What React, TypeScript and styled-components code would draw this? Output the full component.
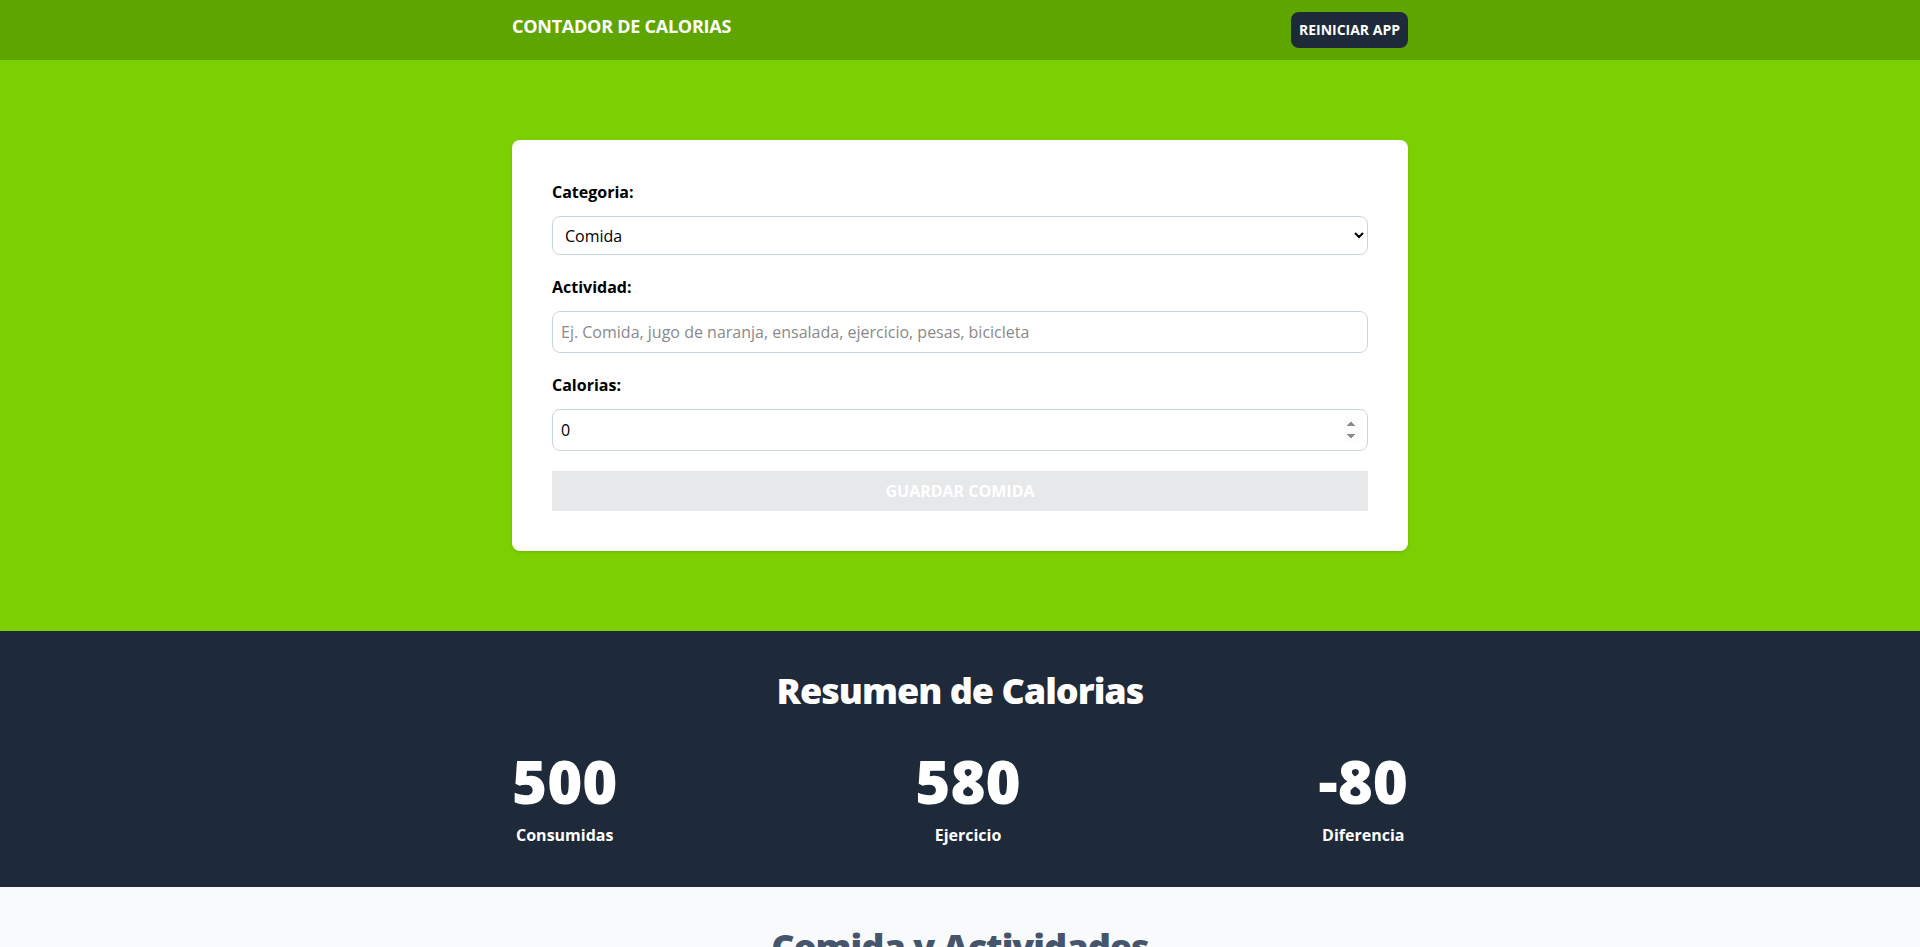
import React, { useState } from "react";
import styled, { createGlobalStyle } from "styled-components";

const GlobalStyle = createGlobalStyle`
  html { scrollbar-width: none; }
  html::-webkit-scrollbar { display: none; }
  *, *::before, *::after { box-sizing: border-box; }
  body {
    margin: 0;
    font-family: "Open Sans", "Noto Sans", sans-serif;
    font-size: 16px;
    line-height: 1.5;
    color: #000;
    background: #f8fafc;
  }
  h1, h2, p { margin: 0; }
`;

const FONT = `"Open Sans", "Noto Sans", sans-serif`;

const Header = styled.header`
  background: #5ea500;
  padding: 12px 0;
`;

const Container = styled.div`
  max-width: 896px;
  margin: 0 auto;
`;

const HeaderBar = styled(Container)`
  display: flex;
  justify-content: space-between;
`;

const Title = styled.h1`
  font-size: 18px;
  line-height: 28px;
  font-weight: 700;
  color: #fff;
  text-transform: uppercase;
  letter-spacing: -0.25px;
`;

const ResetButton = styled.button`
  background: #1e2939;
  color: #fff;
  border: none;
  border-radius: 8px;
  padding: 8px;
  font-family: ${FONT};
  font-size: 14px;
  line-height: 20px;
  font-weight: 700;
  text-transform: uppercase;
  cursor: pointer;
`;

const FormSection = styled.section`
  background: #7ccf00;
  padding: 80px 20px;
`;

const Card = styled.form`
  background: #fff;
  border-radius: 8px;
  padding: 40px;
  box-shadow: 0 1px 3px 0 rgba(0, 0, 0, 0.1), 0 1px 2px -1px rgba(0, 0, 0, 0.1);
  display: flex;
  flex-direction: column;
  gap: 20px;
`;

const Field = styled.div`
  display: grid;
  grid-template-columns: 1fr;
  gap: 12px;
`;

const Label = styled.label`
  font-weight: 700;
  line-height: 24px;
`;

const Select = styled.select`
  width: 100%;
  height: 39px;
  border: 1px solid #cad5e2;
  border-radius: 8px;
  padding: 0 8px;
  background: #fff;
  font-family: ${FONT};
  font-size: 16px;
  color: #000;
`;

const Input = styled.input`
  width: 100%;
  border: 1px solid #cad5e2;
  border-radius: 8px;
  padding: 8px;
  font-family: ${FONT};
  font-size: 16px;
  line-height: 24px;
  color: #000;
  &::placeholder { color: #8a8a8a; }
  &::-webkit-inner-spin-button,
  &::-webkit-outer-spin-button { opacity: 1; }
`;

const Submit = styled.button`
  width: 100%;
  border: none;
  padding: 8px;
  background: #1e2939;
  color: #fff;
  font-family: ${FONT};
  font-size: 16px;
  line-height: 24px;
  font-weight: 700;
  text-transform: uppercase;
  &:disabled { opacity: 0.1; }
`;

const SummarySection = styled.section`
  background: #1e2939;
  padding: 40px 0;
`;

const SummaryTitle = styled.h2`
  font-size: 36px;
  line-height: 40px;
  font-weight: 800;
  color: #fff;
  text-align: center;
  letter-spacing: -1px;
`;

const StatsRow = styled.div`
  display: flex;
  justify-content: space-between;
  align-items: center;
  gap: 20px;
  margin-top: 40px;
`;

const Stat = styled.p`
  display: grid;
  grid-template-columns: 1fr;
  gap: 12px;
  text-align: center;
  color: #fff;
  font-weight: 700;
`;

const StatNumber = styled.span`
  font-size: 60px;
  line-height: 1;
  font-weight: 800;
`;

const ListSection = styled.section`
  max-width: 896px;
  margin: 0 auto;
  padding: 40px;
`;

const ListTitle = styled.h2`
  font-size: 36px;
  line-height: 40px;
  font-weight: 800;
  color: #45556c;
  text-align: center;
  letter-spacing: -1px;
`;

const stats = [
  { value: 500, text: "Consumidas" },
  { value: 580, text: "Ejercicio" },
  { value: -80, text: "Diferencia" },
];

export default function App() {
  const [category, setCategory] = useState("1");
  const [name, setName] = useState("");
  const [calories, setCalories] = useState(0);
  const valid = name.trim() !== "" && calories > 0;

  return (
    <>
      <GlobalStyle />
      <Header>
        <HeaderBar>
          <Title>Contador de Calorias</Title>
          <ResetButton type="button">Reiniciar App</ResetButton>
        </HeaderBar>
      </Header>

      <FormSection>
        <Container>
          <Card onSubmit={(e) => e.preventDefault()}>
            <Field>
              <Label htmlFor="category">Categoria:</Label>
              <Select id="category" value={category} onChange={(e) => setCategory(e.target.value)}>
                <option value="1">Comida</option>
                <option value="2">Ejercicio</option>
              </Select>
            </Field>
            <Field>
              <Label htmlFor="name">Actividad:</Label>
              <Input
                id="name"
                type="text"
                placeholder="Ej. Comida, jugo de naranja, ensalada, ejercicio, pesas, bicicleta"
                value={name}
                onChange={(e) => setName(e.target.value)}
              />
            </Field>
            <Field>
              <Label htmlFor="calories">Calorias:</Label>
              <Input
                id="calories"
                type="number"
                value={calories}
                onChange={(e) => setCalories(Number(e.target.value))}
              />
            </Field>
            <Submit type="submit" disabled={!valid}>
              {category === "1" ? "Guardar Comida" : "Guardar Ejercicio"}
            </Submit>
          </Card>
        </Container>
      </FormSection>

      <SummarySection>
        <Container>
          <SummaryTitle>Resumen de Calorias</SummaryTitle>
          <StatsRow>
            {stats.map((s) => (
              <Stat key={s.text}>
                <StatNumber>{s.value}</StatNumber>
                {s.text}
              </Stat>
            ))}
          </StatsRow>
        </Container>
      </SummarySection>

      <ListSection>
        <ListTitle>Comida y Actividades</ListTitle>
      </ListSection>
    </>
  );
}
